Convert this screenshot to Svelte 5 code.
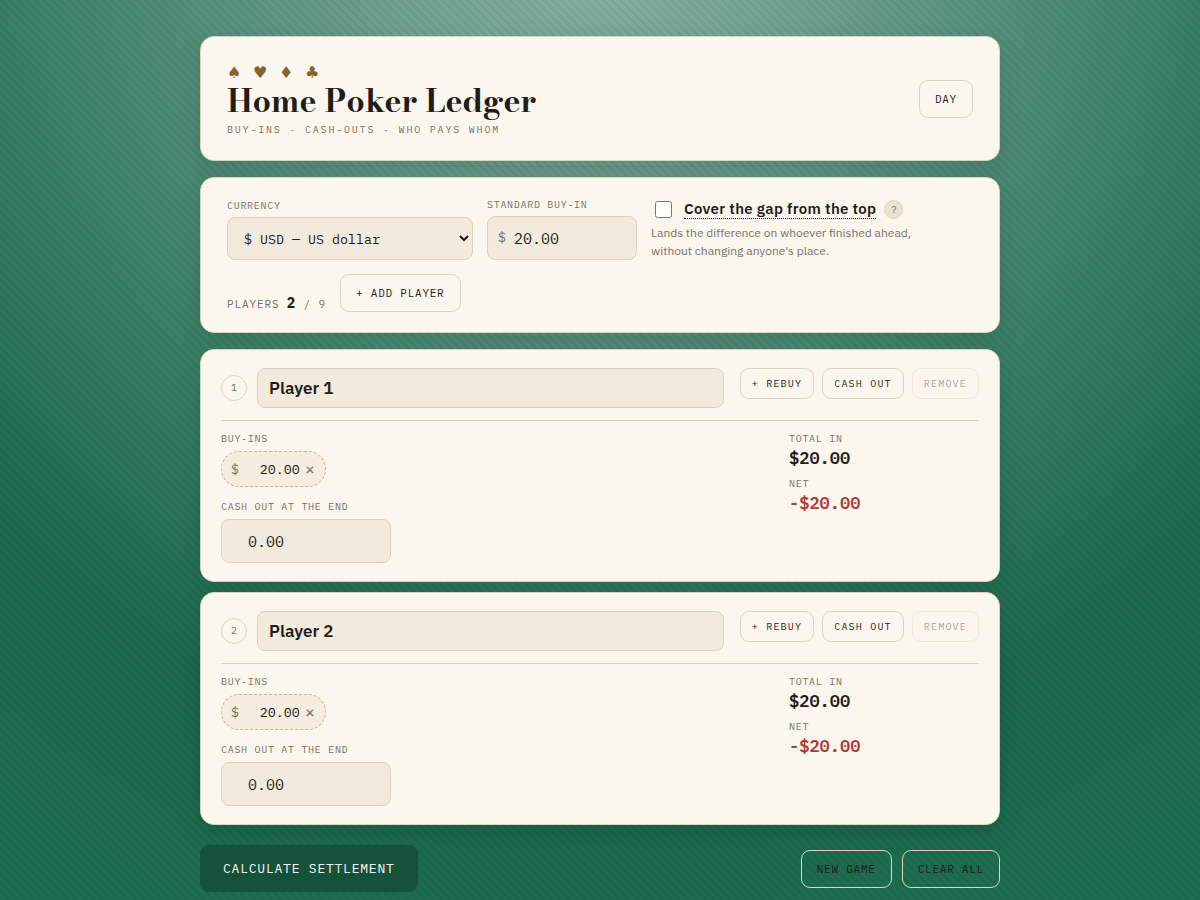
<script lang="ts">
	const suits = ['♠', '♥', '♦', '♣'];
	const maxPlayers = 9;

	let buyIn = $state('20.00');
	let coverGap = $state(false);
	let players = $state([
		{ name: 'Player 1', buyIns: ['20.00'], cashOut: '' },
		{ name: 'Player 2', buyIns: ['20.00'], cashOut: '' }
	]);

	const total = (buyIns: string[]) => buyIns.reduce((sum, b) => sum + Number(b), 0);

	function money(n: number) {
		return (n < 0 ? '-' : '') + '$' + Math.abs(n).toFixed(2);
	}

	function addPlayer() {
		if (players.length < maxPlayers) {
			players.push({ name: `Player ${players.length + 1}`, buyIns: [buyIn], cashOut: '' });
		}
	}
</script>

<div class="page">
	<main>
		<header class="card masthead">
			<div class="brand">
				<div class="suits" aria-hidden="true">
					{#each suits as suit}
						<span>{suit}</span>
					{/each}
				</div>
				<h1>Home Poker Ledger</h1>
				<p class="tagline">BUY-INS · CASH-OUTS · WHO PAYS WHOM</p>
			</div>
			<button class="btn">DAY</button>
		</header>

		<section class="card settings">
			<div class="field currency">
				<label for="currency">CURRENCY</label>
				<select id="currency">
					<option>$ USD — US dollar</option>
					<option>€ EUR — Euro</option>
					<option>£ GBP — Pound sterling</option>
				</select>
			</div>
			<div class="field standard">
				<label for="buyin">STANDARD BUY-IN</label>
				<div class="money">
					<span>$</span>
					<input id="buyin" type="text" inputmode="decimal" bind:value={buyIn} />
				</div>
			</div>
			<div class="cover">
				<div class="cover-row">
					<input id="cover" type="checkbox" bind:checked={coverGap} />
					<label for="cover">Cover the gap from the top</label>
					<button class="help" aria-label="What does this do?">?</button>
				</div>
				<p>Lands the difference on whoever finished ahead, without changing anyone's place.</p>
			</div>
			<p class="count">PLAYERS <b>{players.length}</b> / {maxPlayers}</p>
			<button class="btn" onclick={addPlayer}>+ ADD PLAYER</button>
		</section>

		<div class="players">
			{#each players as player, i}
				<section class="card player">
					<div class="player-head">
						<span class="seat">{i + 1}</span>
						<input class="name" type="text" aria-label="Player name" bind:value={player.name} />
						<div class="actions">
							<button class="btn small" onclick={() => player.buyIns.push(buyIn)}>+ REBUY</button>
							<button class="btn small">CASH OUT</button>
							<button class="btn small" disabled={players.length <= 2} onclick={() => players.splice(i, 1)}>REMOVE</button>
						</div>
					</div>
					<div class="player-body">
						<div>
							<div class="label">BUY-INS</div>
							<div class="chips">
								{#each player.buyIns as _, j}
									<div class="chip">
										<span>$</span>
										<input type="text" aria-label="Buy-in amount" bind:value={player.buyIns[j]} />
										<button aria-label="Remove buy-in" onclick={() => player.buyIns.splice(j, 1)}>×</button>
									</div>
								{/each}
							</div>
							<div class="field cashout">
								<label for="cash-{i}">CASH OUT AT THE END</label>
								<input id="cash-{i}" type="text" inputmode="decimal" placeholder="0.00" bind:value={player.cashOut} />
							</div>
						</div>
						<div class="totals">
							<div class="label">TOTAL IN</div>
							<div class="amount">{money(total(player.buyIns))}</div>
							<div class="label">NET</div>
							<div class="amount loss">{money(Number(player.cashOut) - total(player.buyIns))}</div>
						</div>
					</div>
				</section>
			{/each}
		</div>

		<footer>
			<button class="primary">CALCULATE SETTLEMENT</button>
			<div class="footer-actions">
				<button class="btn">NEW GAME</button>
				<button class="btn">CLEAR ALL</button>
			</div>
		</footer>
	</main>
</div>

<style>
	:global(body) {
		margin: 0;
		background: #1c6b4d;
	}

	.page {
		--mono: 'IBM Plex Mono', 'Liberation Mono', monospace;
		--sans: 'IBM Plex Sans', Roboto, sans-serif;
		--ink: #1f1d1a;
		--muted: #777168;
		--line: #ddd3c2;
		--well: #f2eadd;
		box-sizing: border-box;
		min-height: 100vh;
		padding: 36px 20px 8px;
		color: var(--ink);
		font-family: var(--sans);
		background:
			repeating-linear-gradient(45deg, rgba(0, 0, 0, 0.05) 0 2px, transparent 3px 5px, rgba(0, 0, 0, 0.05) 6px),
			radial-gradient(
				ellipse 70% 95% at 50% -10%,
				#8fb7a6 0%,
				#55917c 49%,
				#398065 72%,
				#1c694c 102%,
				#1e6f50 130%
			);
	}

	.page * {
		box-sizing: border-box;
	}

	main {
		max-width: 800px;
		margin: 0 auto;
	}

	h1,
	p {
		margin: 0;
	}

	.card {
		margin-bottom: 16px;
		background: #fcf7ee;
		border: 1px solid #d9d6bf;
		border-radius: 14px;
		box-shadow: 0 8px 24px rgba(0, 0, 0, 0.12);
	}

	.masthead {
		display: flex;
		align-items: center;
		justify-content: space-between;
		padding: 23px 26px;
	}

	.brand {
		padding-top: 2px;
	}

	.suits {
		display: flex;
		gap: 12px;
		font-family: 'DejaVu Sans', sans-serif;
		font-size: 16px;
		line-height: 22px;
		color: #86652b;
	}

	.suits span {
		width: 14px;
	}

	h1 {
		font-family: 'Bodoni Moda', 'Liberation Serif', serif;
		font-size: 32px;
		font-weight: 700;
		line-height: 34px;
	}

	.tagline {
		margin-top: 5px;
		font-family: var(--mono);
		font-size: 10px;
		line-height: 14px;
		letter-spacing: 0.18em;
		color: var(--muted);
	}

	button {
		font-family: var(--mono);
		cursor: pointer;
	}

	.btn {
		padding: 11px 15px;
		font-size: 11px;
		line-height: 14px;
		letter-spacing: 0.07em;
		color: var(--ink);
		background: transparent;
		border: 1px solid var(--line);
		border-radius: 9px;
	}

	.btn.small {
		padding: 8px 11px;
		font-size: 10px;
		line-height: 13px;
		letter-spacing: 0.12em;
	}

	.btn:disabled {
		opacity: 0.4;
		cursor: default;
	}

	.settings {
		display: flex;
		flex-wrap: wrap;
		align-items: flex-end;
		gap: 14px;
		padding: 20px 26px;
	}

	.field {
		display: flex;
		flex-direction: column;
		gap: 4px;
	}

	.field label,
	.label {
		font-family: var(--mono);
		font-size: 10px;
		line-height: 14px;
		letter-spacing: 0.07em;
		color: var(--muted);
	}

	input[type='text'],
	select {
		width: 100%;
		height: 44px;
		color: var(--ink);
		font-family: var(--mono);
		background: var(--well);
		border: 1px solid var(--line);
		border-radius: 8px;
	}

	input::placeholder {
		color: var(--ink);
		opacity: 1;
	}

	.currency {
		width: 246px;
	}

	select {
		height: 43px;
		padding: 0 0 0 12px;
	}

	.standard {
		width: 150px;
	}

	.money {
		position: relative;
	}

	.money span {
		position: absolute;
		left: 11px;
		line-height: 44px;
		font-family: var(--mono);
		font-size: 13px;
		color: var(--muted);
	}

	.money input[type='text'],
	.cashout input[type='text'] {
		padding: 0 10px 0 26px;
		font-size: 15px;
	}

	.cover {
		width: 280px;
	}

	.cover-row {
		display: flex;
		align-items: center;
		height: 22px;
		margin-bottom: 4px;
	}

	.cover-row input {
		width: 17px;
		height: 17px;
		margin: 0 12px 0 4px;
	}

	.cover-row label {
		font-size: 15px;
		font-weight: 600;
		line-height: 18px;
		letter-spacing: 0.02em;
		border-bottom: 1px dotted var(--ink);
	}

	.help {
		width: 19px;
		height: 19px;
		margin-left: 8px;
		padding: 0;
		font-size: 10px;
		color: var(--muted);
		background: #ece2d2;
		border: 1px solid var(--line);
		border-radius: 50%;
	}

	.cover p {
		font-size: 12px;
		line-height: 18px;
		color: var(--muted);
	}

	.count {
		font-family: var(--mono);
		font-size: 11px;
		line-height: 16px;
		letter-spacing: 0.08em;
		color: var(--muted);
	}

	.count b {
		font-size: 14px;
		color: var(--ink);
	}

	.players .card {
		margin-bottom: 10px;
	}

	.player {
		padding: 18px 20px;
	}

	.player-head {
		display: flex;
		align-items: center;
		gap: 10px;
		padding-bottom: 12px;
		border-bottom: 1px solid #d9d1c4;
	}

	.seat {
		flex: none;
		width: 26px;
		font-family: var(--mono);
		font-size: 10px;
		line-height: 24px;
		text-align: center;
		color: var(--muted);
		border: 1px solid var(--line);
		border-radius: 50%;
	}

	.player-head .name {
		flex: 1;
		min-width: 0;
		height: 40px;
		padding: 0 11px;
		font-family: var(--sans);
		font-size: 17px;
		font-weight: 600;
	}

	.actions {
		display: flex;
		align-self: flex-start;
		gap: 8px;
		margin-left: 6px;
	}

	.player-body {
		display: grid;
		grid-template-columns: 1fr 190px;
		gap: 16px;
		padding-top: 11px;
	}

	.chips {
		display: flex;
		flex-wrap: wrap;
		gap: 8px;
		margin: 5px 0 13px;
	}

	.chip {
		display: flex;
		align-items: center;
		height: 36px;
		padding: 0 9px;
		background: #f5eddf;
		border: 1px dashed #c9b799;
		border-radius: 18px;
	}

	.chip span {
		font-family: var(--mono);
		font-size: 13px;
		color: var(--muted);
	}

	.chip input[type='text'] {
		width: 61px;
		height: 24px;
		padding: 0;
		text-align: right;
		background: none;
		border: 0;
	}

	.chip button {
		width: 16px;
		padding: 0 0 0 4px;
		font-size: 17px;
		line-height: 20px;
		color: var(--muted);
		background: none;
		border: 0;
	}

	.cashout {
		width: 170px;
		gap: 5px;
	}

	.amount {
		margin-bottom: 7px;
		font-family: var(--mono);
		font-size: 17px;
		font-weight: 600;
		line-height: 24px;
	}

	.loss {
		margin-bottom: 0;
		color: #b03a3a;
	}

	footer {
		display: flex;
		align-items: center;
		justify-content: space-between;
		margin-top: 20px;
	}

	.footer-actions {
		display: flex;
		gap: 10px;
	}

	.primary {
		padding: 14px 22px;
		font-size: 13px;
		line-height: 17px;
		letter-spacing: 0.06em;
		color: #fcf7ee;
		background: #15523b;
		border: 1px solid #15523b;
		border-radius: 9px;
	}
</style>
